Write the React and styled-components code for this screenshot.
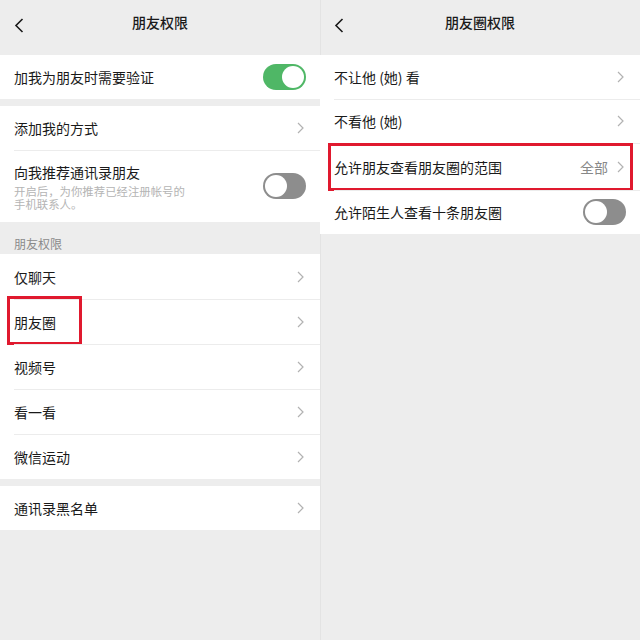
import React from "react";
import styled, { createGlobalStyle } from "styled-components";

const GlobalStyle = createGlobalStyle`
  html, body {
    margin: 0;
    padding: 0;
    background: #ededed;
  }
  body {
    font-family: "Noto Sans CJK SC", "Noto Sans", sans-serif;
    color: #1a1a1a;
  }
`;

const Screen = styled.div`
  display: grid;
  grid-template-columns: 320px 320px;
  width: 640px;
  height: 640px;
  overflow: hidden;
`;

const Panel = styled.div`
  background: #ededed;
  height: 640px;
  ${props => props.$divider && "box-shadow: inset 1px 0 0 #e3e3e3;"}
`;

const Header = styled.div`
  height: 55px;
  display: grid;
  grid-template-columns: 40px 1fr 40px;
  align-items: start;
`;

const Back = styled.div`
  padding: 14px 0 0 14px;
  height: 16px;
`;

const Title = styled.h1`
  margin: 0;
  padding-top: 11px;
  font-size: 14px;
  font-weight: 500;
  line-height: 22px;
  text-align: center;
`;

const Group = styled.div`
  background: #fff;
  margin-top: ${props => props.$gap || 0}px;
`;

const Row = styled.div`
  position: relative;
  display: flex;
  align-items: center;
  height: ${props => props.$h || 44}px;
  padding: 0 16px 0 14px;
  &:not(:first-child)::before {
    content: "";
    position: absolute;
    top: 0;
    left: 14px;
    right: 0;
    height: 1px;
    background: #ececec;
  }
`;

const Text = styled.div`
  flex: 1;
  display: flex;
  flex-direction: column;
`;

const Label = styled.span`
  font-size: 14px;
  line-height: 20px;
`;

const Sub = styled.div`
  width: 178px;
  font-size: 11.4px;
  line-height: 12.5px;
  color: #b4b4b4;
  margin-top: 3px;
`;

const Value = styled.span`
  font-size: 14px;
  color: #888;
  margin-right: 9px;
`;

const SectionTitle = styled.div`
  height: 32px;
  padding: 14px 0 0 14px;
  box-sizing: border-box;
  font-size: 12px;
  line-height: 16px;
  color: #8a8a8a;
`;

const Switch = styled.div`
  position: relative;
  width: 43px;
  height: 26px;
  border-radius: 13px;
  background: ${props => (props.$on ? "#4fb766" : "#8d8d8d")};
  margin-right: -2px;
  &::after {
    content: "";
    position: absolute;
    top: 2px;
    ${props => (props.$on ? "right: 2px;" : "left: 2px;")}
    width: 22px;
    height: 22px;
    border-radius: 50%;
    background: #fff;
  }
`;

const Mark = styled.div`
  position: absolute;
  top: ${props => props.$top}px;
  left: ${props => props.$left}px;
  width: ${props => props.$w}px;
  height: ${props => props.$h}px;
  border: 3px solid #e0192e;
  box-sizing: border-box;
  pointer-events: none;
`;

const Chevron = () => (
  <svg width="7" height="12" viewBox="0 0 7 12">
    <path d="M1 1l5 5-5 5" fill="none" stroke="#b2b2b2" strokeWidth="1.2" />
  </svg>
);

const BackIcon = () => (
  <svg width="10" height="15" viewBox="0 0 10 15">
    <path d="M8.5 1L2 7.5 8.5 14" fill="none" stroke="#1a1a1a" strokeWidth="1.6" />
  </svg>
);

const Top = ({ title }) => (
  <Header>
    <Back>
      <BackIcon />
    </Back>
    <Title>{title}</Title>
  </Header>
);

export default function App() {
  return (
    <>
      <GlobalStyle />
      <Screen>
        <Panel>
          <Top title="朋友权限" />
          <Group>
            <Row>
              <Text>
                <Label>加我为朋友时需要验证</Label>
              </Text>
              <Switch $on />
            </Row>
          </Group>
          <Group $gap={7}>
            <Row>
              <Text>
                <Label>添加我的方式</Label>
              </Text>
              <Chevron />
            </Row>
            <Row $h={72}>
              <Text>
                <Label>向我推荐通讯录朋友</Label>
                <Sub>开启后，为你推荐已经注册帐号的手机联系人。</Sub>
              </Text>
              <Switch />
            </Row>
          </Group>
          <SectionTitle>朋友权限</SectionTitle>
          <Group>
            <Row $h={45}>
              <Text>
                <Label>仅聊天</Label>
              </Text>
              <Chevron />
            </Row>
            <Row $h={45}>
              <Text>
                <Label>朋友圈</Label>
              </Text>
              <Chevron />
              <Mark $top={-3} $left={7} $w={75} $h={49} />
            </Row>
            <Row $h={45}>
              <Text>
                <Label>视频号</Label>
              </Text>
              <Chevron />
            </Row>
            <Row $h={45}>
              <Text>
                <Label>看一看</Label>
              </Text>
              <Chevron />
            </Row>
            <Row $h={45}>
              <Text>
                <Label>微信运动</Label>
              </Text>
              <Chevron />
            </Row>
          </Group>
          <Group $gap={7}>
            <Row>
              <Text>
                <Label>通讯录黑名单</Label>
              </Text>
              <Chevron />
            </Row>
          </Group>
        </Panel>

        <Panel $divider>
          <Top title="朋友圈权限" />
          <Group>
            <Row>
              <Text>
                <Label>不让他 (她) 看</Label>
              </Text>
              <Chevron />
            </Row>
            <Row>
              <Text>
                <Label>不看他 (她)</Label>
              </Text>
              <Chevron />
            </Row>
            <Row $h={47}>
              <Text>
                <Label>允许朋友查看朋友圈的范围</Label>
              </Text>
              <Value>全部</Value>
              <Chevron />
              <Mark $top={0} $left={8} $w={305} $h={48} />
            </Row>
            <Row $h={44}>
              <Text>
                <Label>允许陌生人查看十条朋友圈</Label>
              </Text>
              <Switch />
            </Row>
          </Group>
        </Panel>
      </Screen>
    </>
  );
}
